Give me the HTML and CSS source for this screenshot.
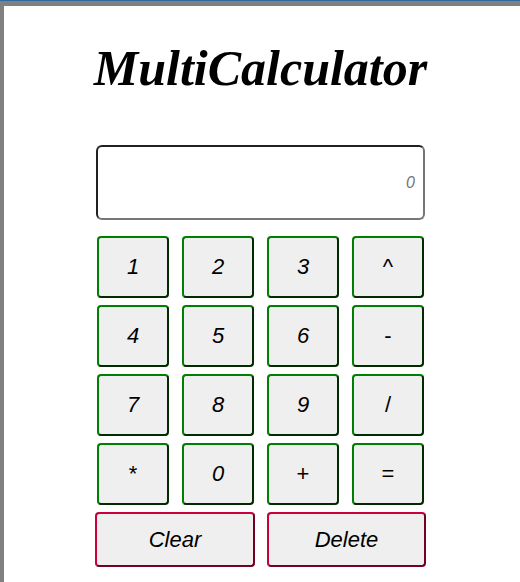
FILE: index.html
```html
<!DOCTYPE html>
<html>
<head>
<meta charset="utf-8">
<title>MultiCalculator</title>
<link rel="stylesheet" href="styles.css">
</head>
<body>
<div class="topline"></div>
<div class="frame">
  <main class="calc">
    <h1 class="title">MultiCalculator</h1>
    <div class="display"><span class="placeholder">0</span></div>
    <div class="keypad">
      <button class="key num">1</button>
      <button class="key num">2</button>
      <button class="key num">3</button>
      <button class="key op">^</button>
      <button class="key num">4</button>
      <button class="key num">5</button>
      <button class="key num">6</button>
      <button class="key op">-</button>
      <button class="key num">7</button>
      <button class="key num">8</button>
      <button class="key num">9</button>
      <button class="key op">/</button>
      <button class="key op">*</button>
      <button class="key num">0</button>
      <button class="key op">+</button>
      <button class="key op">=</button>
    </div>
    <div class="actions">
      <button class="action">Clear</button>
      <button class="action">Delete</button>
    </div>
  </main>
</div>
</body>
</html>
```
FILE: styles.css
```css
html, body {
  margin: 0;
  padding: 0;
  background: #ffffff;
}
body {
  height: 582px;
  overflow: hidden;
  display: flex;
  flex-direction: column;
}
.topline {
  height: 1px;
  background: #2f6b9c;
}
.frame {
  flex: 1;
  border-top: 5px solid #808080;
  border-left: 4px solid #808080;
  padding-right: 3px;
  background: #ffffff;
}
.calc {
  width: 331px;
  margin: 0 auto;
  display: flex;
  flex-direction: column;
}
.title {
  margin: 34px -20px 0;
  font-family: "Liberation Serif", "Times New Roman", serif;
  font-style: italic;
  font-weight: bold;
  font-size: 50px;
  line-height: 56px;
  text-align: center;
  color: #000;
}
.display {
  box-sizing: border-box;
  width: 329px;
  height: 75px;
  margin: 49px 1px 0;
  border: 2px inset #767676;
  border-radius: 6px;
  display: flex;
  align-items: center;
  justify-content: flex-end;
  padding-right: 8px;
}
.placeholder {
  font-family: "Liberation Sans", Arial, sans-serif;
  font-style: italic;
  font-size: 16px;
  color: #757575;
}
.keypad {
  margin-top: 16px;
  padding: 0 2px;
  display: grid;
  grid-template-columns: repeat(4, 72px);
  grid-auto-rows: 62px;
  column-gap: 13px;
  row-gap: 7px;
}
.key, .action {
  box-sizing: border-box;
  background: #efefef;
  border-radius: 4px;
  font-family: "Liberation Sans", Arial, sans-serif;
  font-size: 22px;
  color: #000;
  padding: 0;
  margin: 0;
}
.key {
  border: 2px outset #008000;
}
.num {
  font-style: italic;
}
.op {
  font-style: normal;
}
.actions {
  margin-top: 7px;
  display: grid;
  grid-template-columns: 160px 159px;
  grid-auto-rows: 55px;
  column-gap: 12px;
}
.action {
  border: 2px outset #c8003c;
  font-style: italic;
}
```
